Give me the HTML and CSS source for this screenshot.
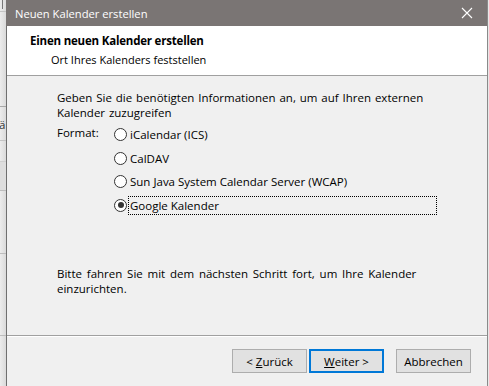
FILE: index.html
```html
<!DOCTYPE html>
<html lang="de">
<head>
<meta charset="utf-8">
<title>Neuen Kalender erstellen</title>
<link rel="stylesheet" href="styles.css">
</head>
<body>
<div class="desk">
  <div class="strip">
    <div class="cell c1"><span class="caret"></span></div>
    <div class="cell c2"></div>
    <div class="cell c3">ä</div>
    <div class="cell c4"></div>
    <div class="cell c5"></div>
    <div class="cell c6"></div>
    <div class="cell c7"></div>
    <div class="cell c8"></div>
  </div>
  <div class="dialog">
    <div class="titlebar">
      <span class="title">Neuen Kalender erstellen</span>
      <svg class="close" width="12" height="12" viewBox="0 0 12 12"><path d="M1 1 L11 11 M11 1 L1 11" stroke="#fff" stroke-width="1.1" fill="none"/></svg>
    </div>
    <div class="header">
      <div class="h-title">Einen neuen Kalender erstellen</div>
      <div class="h-sub">Ort Ihres Kalenders feststellen</div>
    </div>
    <div class="content">
      <p class="intro">Geben Sie die benötigten Informationen an, um auf Ihren externen<br>Kalender zuzugreifen</p>
      <div class="format">
        <div class="f-label">Format:</div>
        <div class="options">
          <div class="opt"><span class="radio"></span><span class="o-label">iCalendar (ICS)</span></div>
          <div class="opt"><span class="radio"></span><span class="o-label">CalDAV</span></div>
          <div class="opt"><span class="radio"></span><span class="o-label">Sun Java System Calendar Server (WCAP)</span></div>
          <div class="opt"><span class="radio checked"></span><span class="o-label focus">Google Kalender</span></div>
        </div>
      </div>
      <p class="outro">Bitte fahren Sie mit dem nächsten Schritt fort, um Ihre Kalender<br>einzurichten.</p>
    </div>
    <div class="footer">
      <button class="btn"><span>&lt; <u>Z</u>urück</span></button>
      <button class="btn default"><span><u>W</u>eiter &gt;</span></button>
      <button class="btn cancel"><span>Abbrechen</span></button>
    </div>
  </div>
</div>
</body>
</html>
```
FILE: styles.css
```css
html, body {
  margin: 0;
  padding: 0;
  width: 489px;
  height: 386px;
  overflow: hidden;
  background: #e8e8e8;
}
body {
  font-family: "Open Sans", "Noto Sans", sans-serif;
  font-size: 11.5px;
  color: #000;
}
.desk {
  display: flex;
  height: 386px;
}
.strip {
  width: 6px;
  display: flex;
  flex-direction: column;
  overflow: hidden;
  background: linear-gradient(to right, #ececec, #dadada);
  color: #333;
}
.cell {
  border-bottom: 1px solid #c4c4c4;
  overflow: hidden;
  white-space: nowrap;
  line-height: 15px;
}
.c1 { height: 12px; padding-left: 2px; box-sizing: border-box; }
.caret { display: block; width: 1px; height: 9px; background: #777; }
.c2 { height: 94px; border-bottom-color: #a8a8a8; }
.c3 { height: 34px; padding-top: 10px; box-sizing: border-box; text-indent: -1px; }
.c4 { height: 20px; border-bottom-color: #d0d0d0; }
.c5 { height: 28px; background: #dedede; border-bottom-color: #bdbdbd; }
.c6 { height: 62px; border-bottom-color: #bdbdbd; }
.c7 { height: 81px; border-bottom-color: #bdbdbd; }
.c8 { flex: 1; border-bottom: none; }

.dialog {
  width: 480px;
  border-left: 1px solid #6f6f6f;
  border-right: 1px solid #8a8a8a;
  display: flex;
  flex-direction: column;
  background: #f0f0f0;
}
.titlebar {
  height: 26px;
  background: #7a7574;
  display: flex;
  align-items: center;
  justify-content: space-between;
  margin-left: -1px;
  padding: 0 14px 0 9px;
  color: #fff;
  font-size: 11.2px;
}
.title { line-height: 15px; }
.close { display: block; }

.header {
  height: 49px;
  background: #fff;
  border-bottom: 1px solid #a0a0a0;
  padding-left: 23px;
}
.h-title {
  font-weight: bold;
  font-size: 11.5px;
  letter-spacing: -0.2px;
  line-height: 15px;
  margin-top: 7px;
}
.h-sub {
  font-size: 11px;
  line-height: 15px;
  margin-top: 4px;
  padding-left: 21px;
}

.content {
  height: 259px;
  padding-left: 50px;
  box-sizing: border-box;
}
.intro {
  margin: 14px 0 0;
  line-height: 15px;
  word-spacing: 0.9px;
}
.format {
  display: flex;
  margin-top: 3px;
}
.f-label {
  width: 57px;
  line-height: 15px;
  margin-top: 2px;
}
.options {
  display: flex;
  flex-direction: column;
}
.opt {
  height: 23.5px;
  display: flex;
  align-items: center;
}
.radio {
  width: 11px;
  height: 11px;
  border: 1px solid #333;
  border-radius: 50%;
  background: #fff;
  position: relative;
  flex: none;
}
.radio.checked::after {
  content: "";
  position: absolute;
  left: 2.5px;
  top: 2.5px;
  width: 6px;
  height: 6px;
  border-radius: 50%;
  background: #333;
}
.o-label {
  line-height: 15px;
  padding: 1px 2px 1px 1px;
  margin-left: 1px;
  border: 1px solid transparent;
}
.o-label.focus {
  border: 1px dotted #000;
  width: 304px;
}
.outro {
  margin: 49px 0 0;
  line-height: 15px;
  word-spacing: 1.8px;
}

.footer {
  flex: 1;
  border-top: 1px solid #a0a0a0;
  box-shadow: inset 0 1px #fff;
  padding: 13px 16px 0 0;
  display: flex;
  justify-content: flex-end;
  align-items: flex-start;
}
.btn {
  width: 75px;
  height: 24px;
  padding: 0;
  margin: 0;
  background: #e1e1e1;
  border: 1px solid #adadad;
  font-family: inherit;
  font-size: 11.5px;
  color: #000;
  display: flex;
  align-items: center;
  justify-content: center;
}
.btn.default {
  margin-left: 2px;
  border: 2px solid #0078d7;
}
.btn.cancel {
  margin-left: 12px;
}
```
